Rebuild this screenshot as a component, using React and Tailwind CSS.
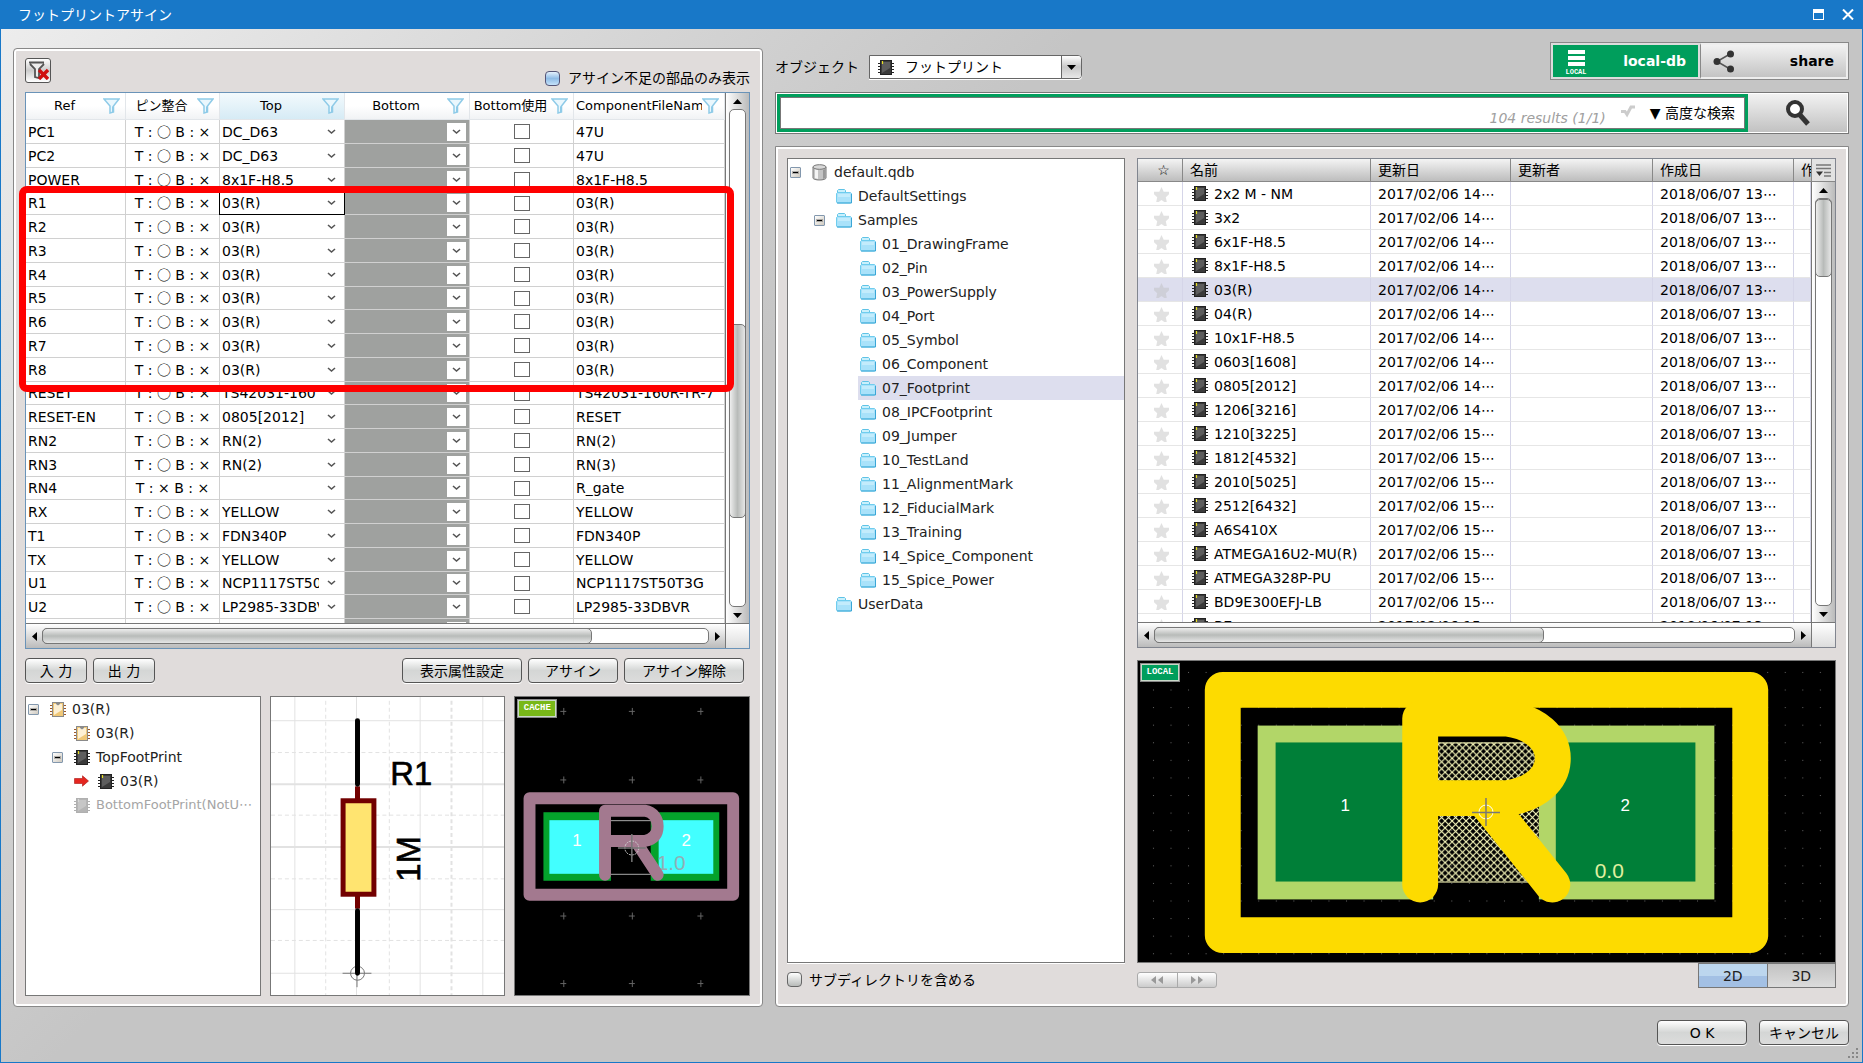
import { useState } from 'react';
import clsx from 'clsx';

const parts = [
  ['PC1', 'DC_D63', '47U'],
  ['PC2', 'DC_D63', '47U'],
  ['POWER', '8x1F-H8.5', '8x1F-H8.5'],
  ['R1', '03(R)', '03(R)'],
  ['R2', '03(R)', '03(R)'],
  ['R3', '03(R)', '03(R)'],
  ['R4', '03(R)', '03(R)'],
  ['R5', '03(R)', '03(R)'],
  ['R6', '03(R)', '03(R)'],
  ['R7', '03(R)', '03(R)'],
  ['R8', '03(R)', '03(R)'],
  ['RESET', 'TS42031-160', 'TS42031-160R-TR-7'],
  ['RESET-EN', '0805[2012]', 'RESET'],
  ['RN2', 'RN(2)', 'RN(2)'],
  ['RN3', 'RN(2)', 'RN(3)'],
  ['RN4', '', 'R_gate'],
  ['RX', 'YELLOW', 'YELLOW'],
  ['T1', 'FDN340P', 'FDN340P'],
  ['TX', 'YELLOW', 'YELLOW'],
  ['U1', 'NCP1117ST50T3G', 'NCP1117ST50T3G'],
  ['U2', 'LP2985-33DBVR', 'LP2985-33DBVR'],
  ['', '', ''],
];

const folders = [
  '01_DrawingFrame',
  '02_Pin',
  '03_PowerSupply',
  '04_Port',
  '05_Symbol',
  '06_Component',
  '07_Footprint',
  '08_IPCFootprint',
  '09_Jumper',
  '10_TestLand',
  '11_AlignmentMark',
  '12_FiducialMark',
  '13_Training',
  '14_Spice_Component',
  '15_Spice_Power',
];

const footprints = [
  ['2x2 M - NM', 14],
  ['3x2', 14],
  ['6x1F-H8.5', 14],
  ['8x1F-H8.5', 14],
  ['03(R)', 14],
  ['04(R)', 14],
  ['10x1F-H8.5', 14],
  ['0603[1608]', 14],
  ['0805[2012]', 14],
  ['1206[3216]', 14],
  ['1210[3225]', 15],
  ['1812[4532]', 15],
  ['2010[5025]', 15],
  ['2512[6432]', 15],
  ['A6S410X', 15],
  ['ATMEGA16U2-MU(R)', 15],
  ['ATMEGA328P-PU', 15],
  ['BD9E300EFJ-LB', 15],
  ['B7', 15],
];

function Chip({ tone = 'dark' }) {
  const colors = {
    dark: ['#3a3a3a', '#5d5d5d', '#222', '#e8e020'],
    gold: ['#f0c878', '#fdf0d4', '#a05a28', '#8a8a8a'],
    gray: ['#b5b5b5', '#c6c6c6', '#b0b0b0', '#d8d8d8'],
  };
  const [body, shine, pin, mark] = colors[tone];
  return (
    <svg width="16" height="15" viewBox="0 0 16 15" className="shrink-0" aria-hidden="true">
      <path d="M0 3.5h16M0 6.5h16M0 9.5h16M0 12.5h16" stroke={pin} strokeWidth="1" />
      <rect x="2.5" y="0.5" width="11" height="14" fill={body} stroke={tone === 'gold' ? '#8a8a8a' : pin} />
      <path d="M4 2h8v6l-8 5z" fill={shine} />
      {tone === 'gold' ? (
        <path d="M6 0h4v2l-2 1.500l-2-1.500z" fill={mark} />
      ) : (
        <path d="M4.500 1v3" stroke={mark} strokeWidth="1.200" />
      )}
    </svg>
  );
}

function Folder() {
  return (
    <svg width="16" height="15" viewBox="0 0 16 15" className="shrink-0" aria-hidden="true">
      <path d="M1.500 4V1.500l1-1h6l1 1V4" fill="#c9f0fc" stroke="#5fc3e6" />
      <path d="M0.500 13V4.500l1-1h13l1 1V13l-1 1h-13z" fill="#a9e2fa" stroke="#6fcdee" />
      <path d="M2 5h12v3H2z" fill="#c3ecfc" />
      <path d="M1 14h14.500V5" fill="none" stroke="#3ba6d6" />
    </svg>
  );
}

function Database() {
  return (
    <svg width="15" height="17" viewBox="0 0 15 17" className="shrink-0" aria-hidden="true">
      <path d="M1 3v11c0 1 3 2 6.500 2s6.500-1 6.500-2V3" fill="#c4c4c4" stroke="#777" />
      <path d="M3 5v9l3 1V6z" fill="#f4f4f4" />
      <path d="M11 6v9l2-1V5z" fill="#989898" />
      <ellipse cx="7.500" cy="3" rx="6.500" ry="2.300" fill="#d8d8d8" stroke="#777" />
    </svg>
  );
}

function Funnel() {
  return (
    <svg width="17" height="16" viewBox="0 0 17 16" className="shrink-0" aria-hidden="true">
      <path d="M1 1h15L10.500 8v6l-3.500 1V8z" fill="#eaf7fd" stroke="#8fcbe8" strokeWidth="1.500" />
      <path d="M9 8.500V15l2-1V8z" fill="#8fcbe8" />
    </svg>
  );
}

function Expander() {
  return (
    <button
      type="button"
      aria-label="折りたたむ"
      className="flex h-[11px] w-[11px] shrink-0 items-center justify-center rounded-[1px] border border-[#8297ad] bg-linear-to-br from-white to-[#cfcac0]"
    >
      <span className="h-px w-[5px] bg-black outline outline-[#222]/30" />
    </button>
  );
}

function Chevron() {
  return (
    <svg width="9" height="6" viewBox="0 0 9 6" aria-hidden="true">
      <path d="M1 1l3.500 3L8 1" fill="none" stroke="#555" strokeWidth="1.600" />
    </svg>
  );
}

function Star() {
  return (
    <svg width="17" height="18" viewBox="0 0 17 18" aria-hidden="true">
      <path
        d="M8.500 2l2.200 4.800H16v2.400l-3.200 3 1 4.800h-2.500L8.500 15l-2.800 2H3.200l1-4.800L1 9.200V6.800h5.300z"
        fill="#bdbdbd"
        fillOpacity=".45"
      />
    </svg>
  );
}

function Button({ className, children }) {
  return (
    <button
      type="button"
      className={clsx(
        'h-[25px] rounded-[4px] border border-[#555] bg-linear-to-b from-white via-[#d4d6d5] via-50% to-[#dcdcdc] text-sm leading-none text-black shadow-[0_1px_0_#fff]',
        className
      )}
    >
      {children}
    </button>
  );
}

const arrows = {
  up: 'M0 6l4.500-5L9 6z',
  down: 'M0 1h9L4.500 6z',
  left: 'M6 0v9L1 4.500z',
  right: 'M1 0v9l5-4.500z',
};

function Arrow({ dir }) {
  const tall = dir === 'left' || dir === 'right';
  return (
    <svg width={tall ? 7 : 9} height={tall ? 9 : 7} viewBox={tall ? '0 0 7 9' : '0 0 9 7'} aria-hidden="true">
      <path d={arrows[dir]} fill="#000" />
    </svg>
  );
}

function ScrollY({ before, thumb, after }) {
  return (
    <div className="flex w-6 shrink-0 flex-col border-l border-[#777] bg-linear-to-r from-white to-[#bbb]">
      <button type="button" aria-label="上へ" className="flex h-4 items-center justify-center"><Arrow dir="up" /></button>
      <div className="ml-[3px] flex w-[17px] flex-1 flex-col rounded-[5px] border border-[#777] bg-white">
        <div style={{ flexGrow: before }} />
        <div className="-mx-px rounded-[5px] border border-[#777] bg-linear-to-r from-[#eee] via-[#b8bbb9] to-[#e6e6e6]" style={{ flexGrow: thumb }} />
        <div style={{ flexGrow: after }} />
      </div>
      <button type="button" aria-label="下へ" className="flex h-4 items-center justify-center"><Arrow dir="down" /></button>
    </div>
  );
}

function ScrollX({ thumb, after }) {
  return (
    <div className="flex h-[25px] shrink-0 border-t border-[#777]">
      <div className="flex flex-1 items-center bg-linear-to-b from-white to-[#bbb]">
        <button type="button" aria-label="左へ" className="flex w-4 justify-center"><Arrow dir="left" /></button>
        <div className="flex h-4 flex-1 rounded-[5px] border border-[#777] bg-white">
          <div className="-my-px -ml-px rounded-[5px] border border-[#777] bg-linear-to-b from-[#eee] via-[#b8bbb9] to-[#e6e6e6]" style={{ flexGrow: thumb }} />
          <div style={{ flexGrow: after }} />
        </div>
        <button type="button" aria-label="右へ" className="flex w-4 justify-center"><Arrow dir="right" /></button>
      </div>
      <div className="w-6 border-l border-[#777] bg-linear-to-b from-white to-[#ddd]" />
    </div>
  );
}

const headers = ['Ref', 'ピン整合', 'Top', 'Bottom', 'Bottom使用', 'ComponentFileName'];

function PartsTable() {
  const cell = 'border-r border-b border-[#d0d0d0] p-0';
  return (
    <div className="relative flex min-h-0 flex-1 flex-col border border-[#6a93b8] bg-white">
      <div className="flex min-h-0 flex-1">
        <div className="min-w-0 flex-1 overflow-hidden">
          <table className="w-full table-fixed border-separate border-spacing-0 text-sm leading-4 text-black">
            <colgroup>
              <col className="w-[100px]" />
              <col className="w-[94px]" />
              <col className="w-[125px]" />
              <col className="w-[125px]" />
              <col className="w-[104px]" />
              <col />
            </colgroup>
            <thead>
              <tr className="h-[27px]">
                {headers.map((h) => (
                  <th
                    key={h}
                    className={clsx(
                      'border-r border-b border-[#e2e6ea] p-0 text-[13px] font-normal',
                      h === 'Top'
                        ? 'bg-linear-to-b from-[#f3fafd] to-[#d6ebf5]'
                        : 'bg-linear-to-b from-white from-50% to-[#f1f3f5]'
                    )}
                  >
                    <div className={clsx('flex items-center pr-[5px]', h === 'ComponentFileName' && 'pl-[2px]')}>
                      <span
                        className={clsx(
                          'min-w-0 flex-1 overflow-hidden whitespace-nowrap',
                          h === 'ComponentFileName' && 'text-left'
                        )}
                      >
                        {h}
                      </span>
                      <Funnel />
                    </div>
                  </th>
                ))}
              </tr>
            </thead>
            <tbody>
              {parts.map(([ref, top, file], i) => (
                <tr key={i} className={i % 4 === 3 ? 'h-[23px]' : 'h-6'}>
                  <td className={clsx(cell, 'pl-[2px] whitespace-nowrap')}>{ref}</td>
                  <td className={clsx(cell, 'text-center whitespace-nowrap')}>
                    T :{' '}
                    {ref === 'RN4' ? '×' : <span className="font-['Noto_Sans_CJK_JP',sans-serif] leading-none">○</span>}
                    {' '}B : ×
                  </td>
                  <td className={cell}>
                    <div
                      className={clsx(
                        'relative flex h-[22px] items-center',
                        ref === 'R1' && 'outline outline-black'
                      )}
                    >
                      <select aria-label={`${ref} Top`} className="w-[99px] appearance-none overflow-hidden pl-[2px]">
                        <option>{top}</option>
                      </select>
                      <span className="pointer-events-none ml-2"><Chevron /></span>
                    </div>
                  </td>
                  <td className={clsx(cell, 'bg-[#9fa19f]')}>
                    <div className="relative flex h-[22px] items-center justify-end pr-[3px]">
                      <select aria-label={`${ref} Bottom`} className="h-[18px] w-[19px] appearance-none bg-white" />
                      <span className="pointer-events-none absolute right-2"><Chevron /></span>
                    </div>
                  </td>
                  <td className={cell}>
                    <input
                      type="checkbox"
                      aria-label={`${ref} Bottom使用`}
                      className="mx-auto block h-[15px] w-4 appearance-none border border-[#666] bg-white"
                    />
                  </td>
                  <td className={clsx(cell, 'overflow-hidden pl-[2px] whitespace-nowrap')}>{file}</td>
                </tr>
              ))}
            </tbody>
          </table>
        </div>
        <ScrollY before={215} thumb={193} after={88} />
      </div>
      <ScrollX thumb={550} after={116} />
      <div className="pointer-events-none absolute top-[93px] right-[15px] -left-[7px] h-[206px] rounded-lg border-7 border-[#ff0000]" />
    </div>
  );
}

function SymbolPreview() {
  return (
    <svg viewBox="0 0 235 300" className="h-full w-full bg-white" preserveAspectRatio="xMidYMid slice">
      <g stroke="#e2e2e2" fill="none">
        <path d="M24 0V300M86 0V300M150 0V300M213 0V300M0 24H235M0 214H235M0 278H235" />
        <path d="M0 88H235M0 151H235" strokeWidth="2" />
        <path d="M55 4V300M119 4V300M0 56H235M0 119H235M0 183H235M0 245H235" strokeDasharray="4 3" />
        <path d="M181.500 4V300" strokeWidth="2" strokeDasharray="4 3" />
      </g>
      <g stroke="#777" fill="none">
        <circle cx="87" cy="278" r="7" />
        <path d="M72 278h29M86.500 270v22" />
      </g>
      <path d="M87 90V213" stroke="#720000" strokeWidth="5" />
      <path d="M87 24V88M87 215V278" stroke="#000" strokeWidth="5" strokeLinecap="round" />
      <rect x="72.500" y="104.500" width="31" height="94" fill="#ffe470" stroke="#720000" strokeWidth="5" />
      <g fontSize="33" fill="#000" stroke="#000" strokeWidth=".6" className="font-['Liberation_Sans_Narrow','Liberation_Sans',sans-serif]">
        <text x="120" y="89">R1</text>
        <text transform="translate(150 186) rotate(-90)">1M</text>
      </g>
    </svg>
  );
}

function CachePreview() {
  return (
    <svg viewBox="0 0 236 300" className="h-full w-full bg-black" preserveAspectRatio="xMidYMid slice">
      <g stroke="#666">
        {[14, 83, 220, 288].map((y) =>
          [49, 118, 187].map((x) => <path key={`${x}-${y}`} d={`M${x - 3} ${y}.500h6M${x}.500 ${y - 3}v7`} />)
        )}
      </g>
      <rect x="29" y="116" width="68" height="69" fill="#04a22c" />
      <rect x="35" y="124" width="56" height="54" fill="#42ffff" />
      <rect x="137" y="116" width="69" height="69" fill="#04a22c" />
      <rect x="145" y="124" width="55" height="54" fill="#42ffff" />
      <path d="M97 124.500h40M97 178.500h40" stroke="#aaa" />
      <g className="font-['Liberation_Sans',sans-serif]" fontSize="17" fill="#fff">
        <text x="58" y="150">1</text>
        <text x="168" y="150">2</text>
        <text x="143" y="174" fontSize="21" fill="#8fb0b5">1.0</text>
      </g>
      <g fill="none" stroke="#a3798f" strokeWidth="12">
        <rect x="15" y="102" width="205" height="97" strokeLinejoin="round" />
        <path d="M91 179V114.500H131C140 116 144 123 144 130C144 138 140 143 131 145H91M123 147L144 179" strokeLinecap="round" strokeLinejoin="round" />
      </g>
      <circle cx="118" cy="152" r="7" fill="none" stroke="#ccc" strokeDasharray="2 1" />
      <path d="M104 152h28M118 138v28" stroke="#777" strokeWidth="1.500" />
    </svg>
  );
}

function LocalPreview() {
  return (
    <svg viewBox="0 0 699 303" className="h-full w-full bg-black" preserveAspectRatio="none">
      <defs>
        <pattern id="dots" width="17.600" height="17.700" patternUnits="userSpaceOnUse" x="15" y="11">
          <rect width="1" height="1" fill="#666" />
        </pattern>
        <pattern id="mesh" width="7" height="7" patternUnits="userSpaceOnUse">
          <path d="M-1-1L8 8M-1 8L8-1" stroke="#ffffc0" strokeWidth="1.100" />
        </pattern>
      </defs>
      <rect width="699" height="303" fill="url(#dots)" />
      <rect x="120" y="65" width="176" height="175" fill="#b2d668" />
      <rect x="138" y="82" width="140" height="140" fill="#007f38" />
      <rect x="402" y="65" width="176" height="175" fill="#b2d668" />
      <rect x="419" y="82" width="140" height="140" fill="#007f38" />
      <rect x="296" y="82" width="106" height="140" fill="url(#mesh)" />
      <path d="M296 82.500h106M296 222.500h106" stroke="#ffffc0" />
      <g fill="none" stroke="#fddb00" strokeWidth="36" strokeLinejoin="round">
        <rect x="85" y="29" width="529" height="247" />
        <path d="M283 225V58H370C399 62 416 78 416 98C416 118 399 134 370 138H283M346 138L415.500 225" strokeLinecap="round" />
      </g>
      <g className="font-['Liberation_Sans',sans-serif]" fontSize="17" fill="#fff">
        <text x="203" y="151">1</text>
        <text x="484" y="151">2</text>
        <text x="458" y="218" fontSize="21" fill="#e0f0a0">0.0</text>
      </g>
      <circle cx="349" cy="152" r="7" fill="none" stroke="#fff" />
      <path d="M335 152.500h28M349 138v28" stroke="#777" strokeWidth="1.500" />
    </svg>
  );
}

function Badge({ className, children }) {
  return (
    <span
      className={clsx(
        "absolute top-[2px] left-[2px] flex h-[19px] w-10 items-center justify-center border-2 border-[#c8d8c8] font-['Liberation_Mono',monospace] text-[9px] leading-none font-bold text-white outline -outline-offset-1 outline-[#888]",
        className
      )}
    >
      {children}
    </span>
  );
}

function PartTree() {
  return (
    <ul className="h-full overflow-hidden bg-white text-sm leading-6 text-[#222]">
      <li className="flex h-6 items-center pl-[2px]"><Expander /><span className="ml-[11px] flex"><Chip tone="gold" /></span><span className="ml-1.5">03(R)</span></li>
      <li className="flex h-6 items-center pl-12"><Chip tone="gold" /><span className="ml-1.5">03(R)</span></li>
      <li className="flex h-6 items-center pl-[26px]"><Expander /><span className="ml-[11px] flex"><Chip /></span><span className="ml-1.5">TopFootPrint</span></li>
      <li className="flex h-6 items-center pl-12">
        <svg width="15" height="12" viewBox="0 0 15 12" aria-hidden="true">
          <path d="M.5 3.500h8V.8L14.500 6 8.500 11.200V8.500h-8z" fill="#e5251f" stroke="#a81510" strokeWidth=".6" />
        </svg>
        <span className="ml-[9px] flex"><Chip /></span><span className="ml-1.5">03(R)</span>
      </li>
      <li className="flex h-6 items-center pl-12 text-[#a5a5a5]"><Chip tone="gray" /><span className="ml-1.5 text-[13px] whitespace-nowrap">BottomFootPrint(NotU⋯</span></li>
    </ul>
  );
}

function LibraryTree() {
  const [current, setCurrent] = useState('07_Footprint');
  return (
    <ul className="min-h-0 flex-1 overflow-hidden border border-[#777] bg-white pt-px text-sm leading-6 text-[#222] shadow-[0_1px_0_#fff]">
      <li className="flex h-6 items-center pl-[2px]"><Expander /><span className="ml-[11px] flex"><Database /></span><span className="ml-[7px]">default.qdb</span></li>
      <li className="flex h-6 items-center pl-12"><Folder /><span className="ml-[6px]">DefaultSettings</span></li>
      <li className="flex h-6 items-center pl-[26px]"><Expander /><span className="ml-[11px] flex"><Folder /></span><span className="ml-[6px]">Samples</span></li>
      {folders.map((name) => (
        <li key={name} className="pl-[70px]">
          <button
            type="button"
            onClick={() => setCurrent(name)}
            className={clsx('flex h-6 w-full items-center pl-[2px]', name === current && 'bg-[#dddeee]')}
          >
            <Folder />
            <span className="ml-[6px]">{name}</span>
          </button>
        </li>
      ))}
      <li className="flex h-6 items-center pl-12"><Folder /><span className="ml-[6px]">UserData</span></li>
    </ul>
  );
}

function FootprintList() {
  const th = 'overflow-hidden border-b border-[#888] bg-linear-to-b from-[#f4f4f4] to-[#bdbdbd] p-0 pl-[7px] font-normal whitespace-nowrap';
  const td = 'overflow-hidden border-r border-b border-r-[#d5d5e8] border-b-[#e6e6e6] p-0 pl-[7px] whitespace-nowrap';
  return (
    <div className="flex min-h-0 flex-1 flex-col border border-[#81858f] bg-white">
      <div className="flex min-h-0 flex-1">
        <div className="min-w-0 flex-1 overflow-hidden">
          <table className="w-full table-fixed border-separate border-spacing-0 text-sm leading-5 text-black">
            <colgroup>
              <col className="w-[45px]" />
              <col className="w-[188px]" />
              <col className="w-[140px]" />
              <col className="w-[142px]" />
              <col className="w-[141px]" />
              <col />
            </colgroup>
            <thead>
              <tr className="h-[23px]">
                <th className={clsx(th, 'border-r text-center')}>☆</th>
                <th className={clsx(th, 'border-r text-left')}>名前</th>
                <th className={clsx(th, 'border-r text-left')}>更新日</th>
                <th className={clsx(th, 'border-r text-left')}>更新者</th>
                <th className={clsx(th, 'border-r text-left')}>作成日</th>
                <th className={clsx(th, 'text-left')}>作成者</th>
              </tr>
            </thead>
            <tbody>
              {footprints.map(([name, hour]) => (
                <tr key={name} className={clsx('h-6', name === '03(R)' && 'bg-[#dddeee]')}>
                  <td className={td}><div className="flex justify-center pr-[5px]"><Star /></div></td>
                  <td className={td}>
                    <div className="flex items-center gap-[6px] pl-[2px]"><Chip />{name}</div>
                  </td>
                  <td className={td}>2017/02/06 {hour}⋯</td>
                  <td className={td} />
                  <td className={td}>2018/06/07 13⋯</td>
                  <td className={td} />
                </tr>
              ))}
            </tbody>
          </table>
        </div>
        <div className="flex flex-col">
          <button type="button" aria-label="列の設定" className="flex h-[23px] w-6 items-center justify-center border-b border-l border-[#888] bg-[#e2e2e2]">
            <svg width="15" height="13" viewBox="0 0 15 13" aria-hidden="true">
              <path d="M0 1h15M0 4.500h15M8 8.500h7M8 12h7" stroke="#777" strokeWidth="1.300" />
              <path d="M0 7.500h7l-3.500 4.500z" fill="#333" />
            </svg>
          </button>
          <div className="flex min-h-0 flex-1"><ScrollY before={0} thumb={77} after={334} /></div>
        </div>
      </div>
      <ScrollX thumb={390} after={252} />
    </div>
  );
}

const panel = 'border border-[#888] bg-[#e0dcdb] pr-3 pl-[11px] shadow-[inset_0_0_0_2px_#fff]';

export default function App() {
  const [query, setQuery] = useState('');

  return (
    <div className="flex h-screen flex-col overflow-hidden border border-t-0 border-[#1878c8] bg-linear-135 from-[#eeeeee] to-[#c5c5c5] to-38% font-['DejaVu_Sans','Noto_Sans_CJK_JP',sans-serif] text-sm text-black">
      <header className="flex h-[29px] shrink-0 items-center justify-between bg-[#1878c8] pr-2 pl-[17px] text-white">
        <h1 className="text-sm leading-5">フットプリントアサイン</h1>
        <div className="flex gap-[18px]">
          <button type="button" aria-label="最大化" className="h-[11px] w-[11px] border border-t-4 border-white" />
          <button type="button" aria-label="閉じる">
            <svg width="12" height="11" viewBox="0 0 12 11"><path d="M1 .5l10 10M11 .5L1 10.500" stroke="#fff" strokeWidth="2" /></svg>
          </button>
        </div>
      </header>

      <main className="grid min-h-0 flex-1 grid-cols-[750fr_1074fr] gap-3 pt-[13px] pr-[13px] pl-3">
        <section className={clsx(panel, 'mt-[6px] flex min-h-0 min-w-0 flex-col rounded-[4px] pt-[9px] pb-[10px]')}>
          <div className="flex h-[34px] shrink-0 justify-between">
            <button type="button" aria-label="フィルタ解除" className="flex h-[25px] w-[26px] items-center justify-center rounded-[3px] border border-[#555] bg-linear-to-b from-white via-[#ccc] to-white">
              <svg width="21" height="19" viewBox="0 0 21 19" aria-hidden="true">
                <path d="M1 1.500h15M2 3l5 5v8l4 1V8l5-5" fill="#eee" stroke="#555" strokeWidth="1.800" />
                <path d="M11 9l9 9M20 9l-9 9" stroke="#d01010" strokeWidth="3.400" />
              </svg>
            </button>
            <label className="flex h-7 items-center gap-2 self-end leading-5">
              <input type="checkbox" className="h-[15px] w-[15px] appearance-none rounded-[4px] border border-[#557] bg-linear-to-b from-[#e4f1fc] via-[#8fbce6] to-[#c4e2fa]" />
              アサイン不足の部品のみ表示
            </label>
          </div>

          <PartsTable />

          <div className="mt-[9px] flex shrink-0 items-center justify-between pr-[6px]">
            <div className="flex gap-[6px]">
              <Button className="w-[62px]">入 力</Button>
              <Button className="w-[62px]">出 力</Button>
            </div>
            <div className="flex gap-[6px]">
              <Button className="w-[120px]">表示属性設定</Button>
              <Button className="w-[90px]">アサイン</Button>
              <Button className="w-[120px]">アサイン解除</Button>
            </div>
          </div>

          <div className="mt-[13px] grid h-[300px] shrink-0 grid-cols-3 gap-[9px]">
            <div className="min-w-0 border border-[#777]"><PartTree /></div>
            <div className="min-w-0 overflow-hidden border border-[#777]"><SymbolPreview /></div>
            <div className="relative min-w-0 overflow-hidden border border-[#777]">
              <CachePreview />
              <Badge className="bg-[#78b818]">CACHE</Badge>
            </div>
          </div>
        </section>

        <section className="flex min-h-0 min-w-0 flex-col">
          <div className="flex h-[38px] shrink-0 items-start justify-between">
            <div className="flex items-center pt-[13px]">
              <label htmlFor="object-type">オブジェクト</label>
              <div className="relative ml-[10px] flex h-6 w-[213px] items-center rounded-r-[4px] border border-[#666] bg-white pl-2 shadow-[0_1px_0_#fff]">
                <Chip />
                <select id="object-type" className="ml-[11px] h-full flex-1 appearance-none leading-5">
                  <option>フットプリント</option>
                </select>
                <span className="pointer-events-none flex h-full w-5 items-center justify-center rounded-r-[3px] border-l border-[#666] bg-linear-to-b from-white via-[#c8c8c8] to-[#e8e8e8]">
                  <Arrow dir="down" />
                </span>
              </div>
            </div>
            <div className="flex h-[38px] w-[299px] border border-[#888] font-bold">
              <button type="button" className="flex flex-1 items-center justify-between border-2 border-[#dcdcdc] bg-[#009e5c] pr-3 pl-3 text-white">
                <span className="flex w-[22px] flex-col items-center gap-[2px] pt-1">
                  <span className="h-1 w-[17px] bg-white" />
                  <span className="h-1 w-[17px] bg-white" />
                  <span className="h-1 w-[17px] bg-white" />
                  <span className="font-['Liberation_Mono',monospace] text-[7px] leading-[8px]">LOCAL</span>
                </span>
                local-db
              </button>
              <button type="button" className="flex flex-1 items-center justify-between border-2 border-l border-[#eee] border-l-[#888] bg-linear-to-b from-[#f2f2f2] to-[#c4c4c4] pr-3 pl-3">
                <svg width="22" height="23" viewBox="0 0 22 23" aria-hidden="true">
                  <path d="M17 4L4 11.500 17 19" fill="none" stroke="#555" strokeWidth="1.500" />
                  <circle cx="17.500" cy="4" r="3.500" fill="#333" />
                  <circle cx="4" cy="11.500" r="3.500" fill="#333" />
                  <circle cx="17.500" cy="19" r="3.500" fill="#333" />
                </svg>
                share
              </button>
            </div>
          </div>

          <form className="mt-3 flex h-[42px] shrink-0 border border-[#777] bg-white p-px" onSubmit={(e) => e.preventDefault()}>
            <div className="flex min-w-0 flex-1 border-3 border-[#009e5c]">
              <div className="flex min-w-0 flex-1 items-center border border-[#777] pr-[9px]">
                <input
                  aria-label="検索"
                  value={query}
                  onChange={(e) => setQuery(e.target.value)}
                  className="h-full min-w-0 flex-1 px-2 outline-none"
                />
                <span className="self-end text-[#a0a0a0] italic">104 results (1/1)</span>
                <svg width="16" height="13" viewBox="0 0 16 13" className="mx-[14px] mb-1" aria-hidden="true">
                  <path d="M1 6.500h4l2 3L11 2h4" fill="none" stroke="#ccc" strokeWidth="3" />
                </svg>
                <button type="button" className="leading-5">▼ 高度な検索</button>
              </div>
            </div>
            <button type="submit" aria-label="検索" className="flex w-[99px] items-center justify-center bg-linear-to-b from-[#f2f2f2] to-[#c2c2c2]">
              <svg width="26" height="28" viewBox="0 0 26 28" aria-hidden="true">
                <circle cx="10" cy="10" r="7" fill="#fff" stroke="#333" strokeWidth="4" />
                <path d="M15 16l8 9" stroke="#333" strokeWidth="5" />
              </svg>
            </button>
          </form>

          <div className={clsx(panel, 'mt-3 grid min-h-0 flex-1 grid-cols-[338fr_699fr] gap-3 rounded-b-[4px] pt-[11px] pb-[18px]')}>
            <div className="flex min-h-0 min-w-0 flex-col">
              <LibraryTree />
              <label className="mt-[4px] flex h-[21px] shrink-0 items-center gap-[7px] pt-1 leading-5">
                <input type="checkbox" className="h-[15px] w-[15px] appearance-none rounded-[4px] border border-[#666] bg-linear-to-b from-white to-[#b8bbb9]" />
                サブディレクトリを含める
              </label>
            </div>
            <div className="flex min-h-0 min-w-0 flex-col">
              <FootprintList />
              <div className="relative mt-3 h-[303px] shrink-0 border border-[#777]">
                <LocalPreview />
                <Badge className="bg-[#009e5c]">LOCAL</Badge>
              </div>
              <div className="flex h-[25px] shrink-0 items-end justify-between">
                <div className="flex h-4 w-20 divide-x divide-[#aaa] rounded-[3px] border border-[#aaa] bg-linear-to-b from-white to-[#ccc]">
                  <button type="button" aria-label="前へ" className="flex flex-1 items-center justify-center">
                    <svg width="14" height="8" viewBox="0 0 14 8"><path d="M6 0v8L1 4zM13 0v8L8 4z" fill="#999" /></svg>
                  </button>
                  <button type="button" aria-label="次へ" className="flex flex-1 items-center justify-center">
                    <svg width="14" height="8" viewBox="0 0 14 8"><path d="M1 0v8l5-4zM8 0v8l5-4z" fill="#999" /></svg>
                  </button>
                </div>
                <div className="flex h-[25px] w-[138px] divide-x divide-[#777] border border-[#777] text-[#222]">
                  <button type="button" className="flex-1 bg-linear-to-b from-[#bcd6ee] from-50% to-[#a3c0e4] to-50%">2D</button>
                  <button type="button" className="flex-1 bg-linear-to-b from-[#c2c2c2] to-[#dcdcdc]">3D</button>
                </div>
              </div>
            </div>
          </div>
        </section>
      </main>

      <footer className="relative flex shrink-0 justify-end gap-3 pt-[13px] pr-[13px] pb-[17px]">
        <Button className="w-[90px]">O K</Button>
        <Button className="w-[90px]">キャンセル</Button>
        <svg width="12" height="12" viewBox="0 0 12 12" className="absolute right-[2px] bottom-[2px]" aria-hidden="true">
          <path d="M8 0h2v2H8zM8 4h2v2H8zM8 8h2v2H8zM4 4h2v2H4zM4 8h2v2H4zM0 8h2v2H0z" fill="#888" />
        </svg>
      </footer>
    </div>
  );
}
